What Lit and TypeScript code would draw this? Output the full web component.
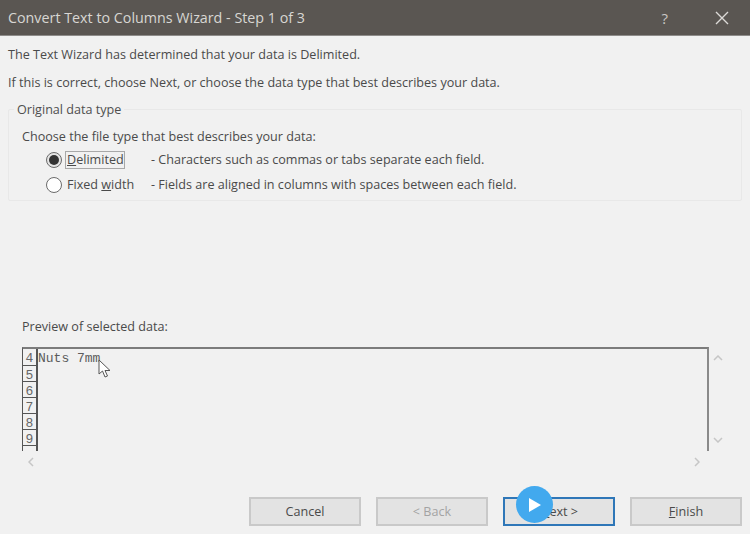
import { LitElement, html, css } from "lit";
import { customElement } from "lit/decorators.js";

@customElement("app-root")
export class AppRoot extends LitElement {
  static styles = css`
    :host { display: block; width: 750px; height: 534px; overflow: hidden; background: #f1f1f1; color: #4a4a4a;
      font-family: "Open Sans", "Noto Sans", sans-serif; font-size: 12.6px; line-height: 16px; }
    .dialog { position: relative; height: 534px; display: flex; flex-direction: column; }
    .title { height: 36px; flex: none; box-sizing: border-box; background: #5a5652; border-bottom: 1px solid #8e8c8a; display: flex; align-items: center; padding: 0 21px 0 8px; color: #d8d6d3; font-size: 14.3px; }
    .title .t { flex: 1; }
    .help { color: #c9c7c4; font-size: 15px; margin-right: 47px; }
    .close { display: block; }
    .body { flex: 1; display: flex; flex-direction: column; padding: 11px 8px 0; }
    .line { height: 16px; white-space: nowrap; }
    .line2 { margin-top: 12px; }
    .group { position: relative; margin-top: 18px; width: 734px; box-sizing: border-box; height: 92px; border: 1px solid #e8e8e8; border-radius: 2px; padding: 19px 13px 0; }
    .legend { position: absolute; left: 5px; top: -8px; background: #f1f1f1; padding: 0 3px; color: #4f4f4f; }
    .opts { display: grid; grid-template-columns: 16px 79px 1fr; column-gap: 5px; margin: 6px 0 0 24px; align-items: center; row-gap: 8px; white-space: nowrap; }
    .radio { width: 14px; height: 14px; border: 1px solid #6b6b6b; border-radius: 50%; background: #fff; display: flex; align-items: center; justify-content: center; box-sizing: content-box; }
    .radio.on { background: #e4e4e4; }
    .radio.on::after { content: ""; width: 10px; height: 10px; border-radius: 50%; background: #333; }
    .lab { justify-self: start; }
    .lab.focus { border: 1px solid #a8a8a8; padding: 0 0 0 1px; margin-left: -2px; }
    u { text-underline-offset: 1px; }
    .plabel { margin: 118px 0 0 14px; }
    .preview { margin: 12px 0 0 14px; display: flex; }
    .box { width: 687px; height: 104px; flex: none; box-sizing: border-box; border-top: 2px solid #7c7c7c; border-right: 2px solid #8a8a8a; border-left: 1px solid #555; overflow: hidden; display: flex; font-family: "Liberation Mono", monospace; font-size: 13px; color: #666; }
    .nums { width: 15px; flex: none; box-sizing: border-box; border-right: 2px solid #555; }
    .num { height: 16px; box-sizing: border-box; border-bottom: 1px solid #555; text-align: center; line-height: 19px; overflow: hidden; }
    .num:first-child { height: 17px; line-height: 20px; }
    .data { line-height: 19px; white-space: pre; color: #5c5c5c; }
    .vbar { width: 16px; margin-left: 1px; display: flex; flex-direction: column; justify-content: space-between; align-items: center; padding-top: 8px; height: 96px; box-sizing: border-box; }
    .hbar { margin: 3px 0 0 14px; width: 687px; display: flex; justify-content: space-between; padding: 0 9px 0 6px; box-sizing: border-box; height: 16px; align-items: center; }
    .buttons { margin-top: 27px; display: flex; gap: 15px; padding-left: 241px; }
    .btn { width: 112px; height: 29px; box-sizing: border-box; border: 2px solid #c9c9c9; background: #e3e3e3; display: flex; align-items: center; justify-content: center; color: #4a4a4a; }
    .btn.dis { color: #a3a3a3; }
    .btn.def { border-color: #2f77b8; position: relative; }
    .play { position: absolute; left: 11px; top: -13px; width: 37px; height: 37px; border-radius: 50%; background: #42a9ee; display: flex; align-items: center; justify-content: center; }
    .cursor { position: absolute; left: 98px; top: 359px; }
  `;

  render() {
    return html`<div class="dialog">
      <div class="title">
        <span class="t">Convert Text to Columns Wizard - Step 1 of 3</span>
        <span class="help">?</span>
        <svg class="close" width="14" height="14" viewBox="0 0 14 14"><path d="M1 1 13 13M13 1 1 13" stroke="#dcdad8" stroke-width="1.4" fill="none"/></svg>
      </div>
      <div class="body">
        <div class="line">The Text Wizard has determined that your data is Delimited.</div>
        <div class="line line2">If this is correct, choose Next, or choose the data type that best describes your data.</div>
        <div class="group">
          <span class="legend">Original data type</span>
          <div class="line">Choose the file type that best describes your data:</div>
          <div class="opts">
            <span class="radio on"></span><span class="lab focus"><u>D</u>elimited</span><span>- Characters such as commas or tabs separate each field.</span>
            <span class="radio"></span><span class="lab">Fixed <u>w</u>idth</span><span>- Fields are aligned in columns with spaces between each field.</span>
          </div>
        </div>
        <div class="line plabel">Preview of selected data:</div>
        <div class="preview">
          <div class="box">
            <div class="nums">${[4, 5, 6, 7, 8, 9, ""].map((n) => html`<div class="num">${n}</div>`)}</div>
            <div class="data">Nuts 7mm</div>
          </div>
          <div class="vbar">
            <svg width="10" height="6" viewBox="0 0 10 6"><path d="M1 5 5 1 9 5" stroke="#c6c6c6" stroke-width="1.5" fill="none"/></svg>
            <svg width="10" height="6" viewBox="0 0 10 6"><path d="M1 1 5 5 9 1" stroke="#c6c6c6" stroke-width="1.5" fill="none"/></svg>
          </div>
        </div>
        <div class="hbar">
          <svg width="6" height="10" viewBox="0 0 6 10"><path d="M5 1 1 5 5 9" stroke="#c6c6c6" stroke-width="1.5" fill="none"/></svg>
          <svg width="6" height="10" viewBox="0 0 6 10"><path d="M1 1 5 5 1 9" stroke="#c6c6c6" stroke-width="1.5" fill="none"/></svg>
        </div>
        <div class="buttons">
          <div class="btn">Cancel</div>
          <div class="btn dis">&lt; Back</div>
          <div class="btn def"><span><u>N</u>ext &gt;</span>
            <div class="play"><svg width="12" height="14" viewBox="0 0 12 14"><path d="M0 0 12 7 0 14Z" fill="#fff"/></svg></div>
          </div>
          <div class="btn"><span><u>F</u>inish</span></div>
        </div>
      </div>
      <svg class="cursor" width="14" height="20" viewBox="0 0 14 20"><path d="M1 1V15L4.500 12 7 18 9.500 17 7 11.500H12Z" fill="#fff" stroke="#555" stroke-width="1"/></svg>
    </div>`;
  }
}
